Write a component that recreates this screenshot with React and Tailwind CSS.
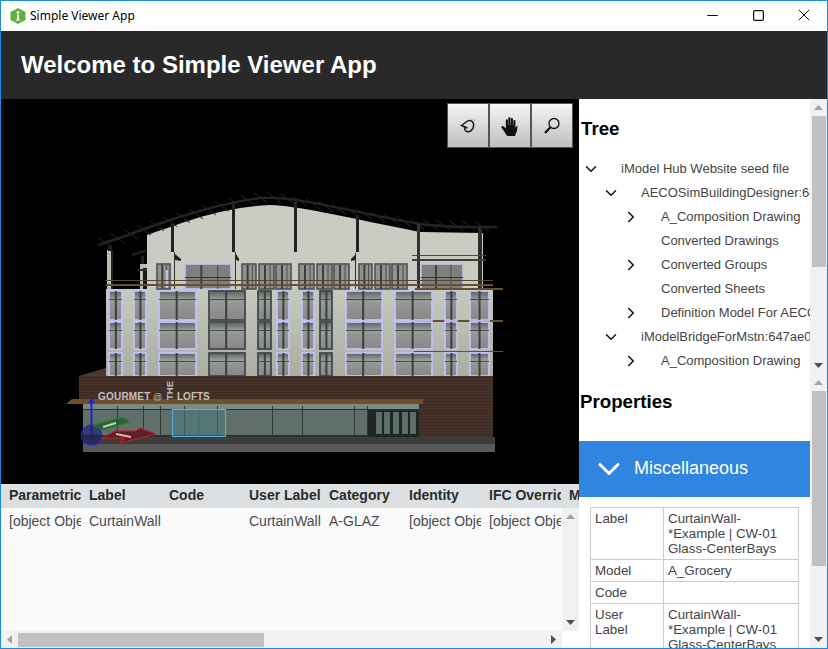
import { Minus, Square, X, ChevronDown, ChevronRight } from 'lucide-react';

const arial = 'font-["Liberation_Sans",Arial,sans-serif]';

const columns = [
  { head: 'Parametric', cell: '[object Object]' },
  { head: 'Label', cell: 'CurtainWall' },
  { head: 'Code', cell: '' },
  { head: 'User Label', cell: 'CurtainWall' },
  { head: 'Category', cell: 'A-GLAZ' },
  { head: 'Identity', cell: '[object Object]' },
  { head: 'IFC Override', cell: '[object Object]' },
  { head: 'Model', cell: '' },
];

const treeRows = [
  { depth: 0, text: 'iModel Hub Website seed file', icon: 'down' },
  { depth: 1, text: 'AECOSimBuildingDesigner:647ae0b1', icon: 'down' },
  { depth: 2, text: 'A_Composition Drawing', icon: 'right' },
  { depth: 2, text: 'Converted Drawings' },
  { depth: 2, text: 'Converted Groups', icon: 'right' },
  { depth: 2, text: 'Converted Sheets' },
  { depth: 2, text: 'Definition Model For AECOSim', icon: 'right' },
  { depth: 1, text: 'iModelBridgeForMstn:647ae0b1', icon: 'down' },
  { depth: 2, text: 'A_Composition Drawing', icon: 'right' },
];

const props = [
  ['Label', 'CurtainWall-\n*Example | CW-01\nGlass-CenterBays'],
  ['Model', 'A_Grocery'],
  ['Code', ''],
  ['User\nLabel', 'CurtainWall-\n*Example | CW-01\nGlass-CenterBays'],
];

// x ranges of the window bays, per storey
const bays = [
  [109, 122], [134, 146], [159, 196], [209, 245], [258, 271], [277, 289],
  [302, 314], [320, 332], [346, 382], [395, 432], [445, 457], [470, 489],
];
const floors = [[291, 320], [322, 349], [353, 376]];
const upper = [
  [157, 170, 0], [185, 231, 1], [242, 256, 0], [259, 274, 0], [276, 291, 0], [299, 314, 0],
  [317, 332, 0], [334, 349, 0], [359, 372, 0], [375, 390, 0], [392, 407, 0], [421, 463, 1],
];
const ribs = [105, 118, 131, 144, 157, 170, 183, 196, 209, 222, 235, 248, 261, 274, 287, 300, 313, 326, 339, 352, 365, 378, 391, 404, 417, 430, 443, 456, 469, 482];
const mullions = [117, 143, 160, 184, 217, 272, 302, 354, 367];
const doors = [376, 384, 393, 402, 410];

function roofY(x) {
  const pts = [[98, 245], [172, 221], [233, 203], [260, 198], [280, 197], [357, 213], [418, 224], [497, 227]];
  for (let i = 1; i < pts.length; i++) {
    if (x <= pts[i][0]) {
      const [x0, y0] = pts[i - 1];
      const [x1, y1] = pts[i];
      return y0 + ((y1 - y0) * (x - x0)) / (x1 - x0);
    }
  }
  return 227;
}

function Building() {
  return (
    <svg viewBox="1 99 578 385" className="block w-full h-full">
      <defs>
        <linearGradient id="wall" x1="0" y1="0" x2="0" y2="1">
          <stop offset="0" stopColor="#c6cabd" />
          <stop offset="1" stopColor="#a9aea0" />
        </linearGradient>
        <linearGradient id="glass" x1="0" y1="0" x2="0" y2="1">
          <stop offset="0" stopColor="#5c625f" />
          <stop offset="0.3" stopColor="#9a9c97" />
          <stop offset="1" stopColor="#85878a" />
        </linearGradient>
        <pattern id="brick" width="4" height="3" patternUnits="userSpaceOnUse">
          <rect width="4" height="3" fill="#463229" />
          <rect y="2" width="4" height="1" fill="#3c2a24" />
        </pattern>
      </defs>

      {/* upper wall under the curved roof */}
      <path d="M147 235 C180 224 220 207 270 205 C300 206 340 216 420 232 L483 233 L483 289 L147 289 Z" fill="#c8ccc2" />
      <rect x="106" y="289" width="387" height="88" fill="url(#wall)" />
      <rect x="107" y="250" width="5" height="39" fill="#b9bdb2" />
      <rect x="140" y="264" width="7" height="25" fill="#b9bdb2" />

      {/* roof ribs */}
      {ribs.map((x) => (
        <line key={x} x1={x - 7} y1={roofY(x) - 5} x2={x + 7} y2={roofY(x) + 5} stroke="#262626" strokeWidth="1" />
      ))}
      <path d="M98 245 C130 236 190 208 260 198 C300 196 340 210 420 224 C450 228 480 227 497 227" fill="none" stroke="#242424" strokeWidth="2.5" />
      <line x1="132" y1="255" x2="147" y2="250" stroke="#222" strokeWidth="2" />

      {/* columns */}
      <rect x="108" y="245" width="4" height="6" fill="#1c1c1c" />
      <rect x="111" y="250" width="2" height="39" fill="#222" />
      <rect x="141" y="256" width="3" height="8" fill="#222" />
      <rect x="143" y="268" width="4" height="21" fill="#181818" />
      <rect x="171" y="223" width="3" height="29" fill="#222" />
      <rect x="232" y="202" width="3" height="50" fill="#222" />
      <rect x="294" y="199" width="3" height="53" fill="#222" />
      <rect x="356" y="215" width="3" height="37" fill="#222" />
      <rect x="417" y="224" width="3" height="65" fill="#333" />
      <rect x="478" y="228" width="4" height="61" fill="#2c2c2c" />
      <rect x="174" y="252" width="1" height="37" fill="#333" />
      <rect x="235" y="252" width="1" height="37" fill="#333" />
      <rect x="355" y="253" width="1" height="36" fill="#333" />
      <path d="M175 254 L181 259 L181 261 L175 260 Z" fill="#222" />
      <path d="M236 254 L239 259 L239 261 L236 260 Z" fill="#222" />
      <path d="M356 254 L351 259 L351 261 L356 260 Z" fill="#222" />

      {/* top storey windows */}
      {upper.map(([a, b, hi]) => (
        <g key={a}>
          <rect x={a} y="264" width={b - a} height="25" fill={hi ? '#7d807c' : '#8f928e'} stroke={hi ? '#c4c0f2' : '#4e5155'} strokeWidth="1.6" />
          <rect x={a + (b - a) / 3} y="265" width="2" height="24" fill="#3c3f42" />
          <rect x={a + (b - a) * 0.7} y="265" width="1" height="24" fill="#4a4d50" />
          {hi ? <rect x={a} y="277" width={b - a} height="1" fill="#333" /> : null}
        </g>
      ))}
      <rect x="166" y="270" width="2" height="18" fill="#c4c0ea" />

      {/* balcony rails */}
      <rect x="105" y="280" width="388" height="1" fill="#5d452d" />
      <rect x="106" y="284" width="387" height="2" fill="#6a4e32" />
      <rect x="415" y="288" width="88" height="2" fill="#6b4c2e" />
      <rect x="414" y="320" width="89" height="2" fill="#6b4c2e" />
      <rect x="414" y="351" width="89" height="1" fill="#6b4c2e" />
      <rect x="412" y="255" width="74" height="1" fill="#5d452d" />
      <rect x="412" y="259" width="74" height="2" fill="#4d3a2e" />
      <rect x="138" y="269" width="9" height="2" fill="#3a2a26" />

      {/* storey windows */}
      {floors.map(([top, bottom]) =>
        bays.map(([a, b], i) => (
          <g key={`${top}-${a}`}>
            <rect x={a} y={top} width={b - a} height={bottom - top} fill="url(#glass)" stroke={i === 3 || i === 4 || i === 7 ? '#44474c' : '#c4c0f5'} strokeWidth="1.8" />
            <rect x={a} y={top + 8} width={b - a} height="1" fill="#4a4d50" />
            <rect x={a + (b - a) * 0.45} y={top} width="2" height={bottom - top} fill="#3c3f42" />
          </g>
        )),
      )}
      <path d="M79 376 L106 368 L106 377 L79 377 Z" fill="#4a3b32" />

      {/* brown signage band and right block */}
      <rect x="79" y="376" width="414" height="24" fill="url(#brick)" />
      <rect x="419" y="376" width="74" height="61" fill="url(#brick)" />
      <path d="M72 399 L423 399 L423 404 L66 404 Z" fill="#6e4f2c" />

      {/* shop front */}
      <rect x="83" y="404" width="336" height="33" fill="#5f6f6a" />
      <rect x="83" y="404" width="336" height="5" fill="#7b8a82" />
      <rect x="83" y="409" width="336" height="1" fill="#2c3230" />
      <rect x="83" y="435" width="336" height="2" fill="#2c3230" />
      {mullions.map((x) => (
        <rect key={x} x={x} y="406" width="1" height="30" fill="#2f3735" />
      ))}
      <rect x="368" y="410" width="51" height="27" fill="#1f2523" />
      {doors.map((x) => (
        <rect key={x} x={x} y="412" width="6" height="22" fill="#5d6e6a" />
      ))}
      <rect x="172.5" y="409.5" width="53" height="27" fill="#4c7b80" fillOpacity="0.55" stroke="#53b2e6" />
      <line x1="199" y1="410" x2="199" y2="436" stroke="#3c6a70" />

      {/* plinth */}
      <rect x="83" y="437" width="412" height="7" fill="#3d3d3d" />
      <rect x="83" y="444" width="412" height="8" fill="#585858" />

      {/* sign lettering */}
      <text x="98" y="399.5" fontFamily="Liberation Sans, sans-serif" fontWeight="700" fontSize="10" letterSpacing="0.2" fill="#c4c1ba">GOURMET</text>
      <text x="153" y="399.5" fontFamily="Liberation Sans, sans-serif" fontSize="9" fill="#c4c1ba">@</text>
      <text x="177" y="399.5" fontFamily="Liberation Sans, sans-serif" fontWeight="700" fontSize="10" fill="#c4c1ba">LOFTS</text>
      <text transform="translate(173 400) rotate(-90)" fontFamily="Liberation Sans, sans-serif" fontWeight="700" fontSize="9.5" fill="#c4c1ba">THE</text>

      {/* transform gizmo */}
      <line x1="91.5" y1="402" x2="91.5" y2="435" stroke="#2222c8" strokeWidth="2" />
      <path d="M88 403 L91.5 398 L95 403 Z" fill="#2222c8" />
      <circle cx="91.5" cy="435" r="10" fill="#1b1b5e" fillOpacity="0.6" stroke="#2424d8" strokeWidth="1.2" />
      <path d="M93 425 L123 417 L130 422 L103 430 Z" fill="#1f5a28" fillOpacity="0.75" stroke="#1d8a2c" />
      <line x1="103" y1="427" x2="116" y2="423" stroke="#b9d8b5" strokeWidth="2" />
      <path d="M102 438 L115 431 L136 431 L140 428 L156 434 L120 443 L125 438 Z" fill="#5c1f22" stroke="#d01a24" />
      <line x1="116" y1="434" x2="131" y2="437" stroke="#e8aab0" strokeWidth="2" />
    </svg>
  );
}

function Arrow({ dir }) {
  const d = {
    up: 'M0 5 L4.5 0 L9 5 Z',
    down: 'M0 0 L9 0 L4.5 5 Z',
    left: 'M5 0 L5 9 L0 4.5 Z',
    right: 'M0 0 L5 4.5 L0 9 Z',
  }[dir];
  const box = dir === 'up' || dir === 'down' ? 'w-[9px] h-[5px]' : 'w-[5px] h-[9px]';
  const view = dir === 'up' || dir === 'down' ? '0 0 9 5' : '0 0 5 9';
  return (
    <svg viewBox={view} className={box}>
      <path d={d} fill={dir === 'down' || dir === 'right' ? '#505050' : '#a3a3a3'} />
    </svg>
  );
}

function VScroll({ thumbHeight }) {
  return (
    <div className="w-[17px] shrink-0 bg-[#f1f1f1] flex flex-col">
      <div className="h-[17px] shrink-0 flex items-center justify-center"><Arrow dir="up" /></div>
      <div className="flex-1 min-h-0">
        <div className="w-[14px] ml-[2px] bg-[#c1c1c1]" style={{ height: thumbHeight }} />
      </div>
      <div className="h-[17px] shrink-0 flex items-center justify-center"><Arrow dir="down" /></div>
    </div>
  );
}

function ToolButton({ children }) {
  return (
    <button className="w-[42px] h-[45px] flex items-center justify-center border border-[#4b5660] bg-gradient-to-b from-[#f5f5f5] to-[#bfbfbf]">
      {children}
    </button>
  );
}

export default function App() {
  return (
    <div className={`w-[828px] h-[649px] flex flex-col overflow-hidden bg-white border border-[#1e88e0] ${arial}`}>
      {/* title bar */}
      <div className="h-[30px] shrink-0 flex items-center bg-white">
        <svg viewBox="0 0 16 16" className="w-[16px] h-[16px] ml-[9px]">
          <path d="M8 0 L15.5 4 L15.5 12 L8 16 L0.5 12 L0.5 4 Z" fill="#5fb13d" />
          <circle cx="8" cy="4.5" r="1.5" fill="#fff" />
          <path d="M7 6.8 H9 V11 L10.5 12.5 H5.5 L7 11 Z" fill="#fff" />
        </svg>
        <span className="ml-[4px] text-[12px] text-black font-['Noto_Sans',sans-serif]">Simple Viewer App</span>
        <div className="ml-auto -mt-[2px] flex items-center">
          <div className="w-[46px] flex justify-center"><Minus size={17} strokeWidth={1} absoluteStrokeWidth color="#111" /></div>
          <div className="w-[46px] flex justify-center"><Square size={13} strokeWidth={1.2} absoluteStrokeWidth color="#111" /></div>
          <div className="w-[46px] flex justify-center"><X size={20} strokeWidth={1} absoluteStrokeWidth color="#111" /></div>
        </div>
      </div>

      {/* app header */}
      <div className="h-[68px] shrink-0 bg-[#292929] flex items-center pl-[20px]">
        <h1 className="text-[24px] font-bold text-white">Welcome to Simple Viewer App</h1>
      </div>

      <div className="flex-1 min-h-0 flex">
        {/* viewport and grid */}
        <div className="w-[578px] shrink-0 flex flex-col">
          <div className="relative h-[385px] shrink-0 bg-black">
            <Building />
            <div className="absolute top-[4px] right-[6px] flex">
              <ToolButton>
                <svg viewBox="0 0 20 20" className="w-[20px] h-[20px]" fill="none" stroke="#1c1c1c" strokeWidth="1.5">
                  <path d="M9.5 5 L3.5 9.5 L9.5 12" />
                  <path d="M9.5 5 C13 3.5 16.5 6 15.5 10.5 C14.8 14 12 16.5 9 15.5 C7.5 15 6.5 13.5 6.5 11" />
                  <path d="M13 2.5 L15 4.5 M15.5 3 L17 5" stroke="#9a9a9a" strokeWidth="0.8" />
                </svg>
              </ToolButton>
              <ToolButton>
                <svg viewBox="0 0 24 24" className="w-[20px] h-[20px]" fill="#111">
                  <path d="M18 24 H10 C8 24 7 22 6 20 L2 14 C1 12 3 11 5 13 L7 15 V5 C7 3.5 9.5 3.5 9.5 5 V11 H10 V2.5 C10 1 12.5 1 12.5 2.5 V11 H13 V3.5 C13 2 15.5 2 15.5 3.5 V11 H16 V6 C16 4.5 18.5 4.5 18.5 6 V14 L21 11 C21 11 21 18 19 21 Z" />
                </svg>
              </ToolButton>
              <ToolButton>
                <svg viewBox="0 0 20 20" className="w-[20px] h-[20px]" fill="none" stroke="#111">
                  <circle cx="12" cy="7.5" r="5" strokeWidth="1.3" />
                  <line x1="8.2" y1="11.5" x2="3" y2="17" strokeWidth="2.2" />
                </svg>
              </ToolButton>
            </div>
          </div>

          <div className="flex-1 min-h-0 flex flex-col bg-[#fafafa]">
            <div className="h-[24px] shrink-0 flex bg-[#dce0e3] pl-[8px] overflow-hidden">
              {columns.map((c) => (
                <div key={c.head} className="w-[72px] mr-[8px] shrink-0 overflow-hidden whitespace-nowrap text-[14px] leading-[23px] font-bold text-[#2b2b2b]">{c.head}</div>
              ))}
            </div>
            <div className="flex-1 min-h-0 flex">
              <div className="flex-1 min-w-0 pl-[8px] pt-[5px] flex overflow-hidden">
                {columns.map((c) => (
                  <div key={c.head} className="w-[72px] mr-[8px] h-[16px] shrink-0 overflow-hidden whitespace-nowrap text-[14px] leading-[16px] text-[#4a4a4a]">{c.cell}</div>
                ))}
              </div>
              <VScroll thumbHeight={0} />
            </div>
            <div className="h-[17px] shrink-0 flex">
              <div className="flex-1 bg-[#f1f1f1] flex items-center">
                <div className="w-[17px] flex justify-center"><Arrow dir="left" /></div>
                <div className="w-[246px] h-[14px] bg-[#c1c1c1]" />
                <div className="ml-auto w-[17px] flex justify-center"><Arrow dir="right" /></div>
              </div>
              <div className="w-[17px] bg-white" />
            </div>
          </div>
        </div>

        {/* side panels */}
        <div className="flex-1 min-w-0 flex flex-col">
          <div className="h-[275px] shrink-0 flex">
            <div className="flex-1 min-w-0 overflow-hidden">
              <h3 className="pl-[2px] mt-[18px] mb-[16px] text-[18.72px] leading-[24px] font-bold text-black">Tree</h3>
              {treeRows.map((row, i) => (
                <div key={i} className="h-[24px] flex items-center whitespace-nowrap text-[13px] text-[#444]" style={{ paddingLeft: 6 + row.depth * 20 }}>
                  <span className="w-[36px] shrink-0 flex items-center">
                    {row.icon === 'down' ? <ChevronDown size={18} strokeWidth={2} color="#111" className="-ml-[3px]" /> : null}
                    {row.icon === 'right' ? <ChevronRight size={18} strokeWidth={2} color="#111" className="-ml-[3px]" /> : null}
                  </span>
                  {row.text}
                </div>
              ))}
            </div>
            <VScroll thumbHeight={151} />
          </div>

          <div className="flex-1 min-h-0 flex">
            <div className="flex-1 min-w-0 overflow-hidden">
              <h3 className="pl-[1px] mt-[16px] text-[18.72px] leading-[24px] font-bold text-black">Properties</h3>
              <div className="mt-[27px] h-[56px] bg-[#3085e0] flex items-center pl-[12px] text-white">
                <ChevronDown size={36} strokeWidth={2} color="#fff" />
                <span className="ml-[7px] -mt-[2px] text-[18px]">Miscellaneous</span>
              </div>
              <div className="pl-[11px] pt-[10px]">
                <table className="w-[209px] border-collapse text-[13.33px] leading-[15px] text-[#444]">
                  <tbody>
                    {props.map(([k, v]) => (
                      <tr key={k}>
                        <td className="w-[73px] align-top border border-[#cccccc] px-[4px] py-[3px] whitespace-pre-line">{k}</td>
                        <td className="align-top border border-[#cccccc] px-[4px] py-[3px] whitespace-pre-line">{v || '\u00a0'}</td>
                      </tr>
                    ))}
                  </tbody>
                </table>
              </div>
            </div>
            <VScroll thumbHeight={175} />
          </div>
        </div>
      </div>
    </div>
  );
}
